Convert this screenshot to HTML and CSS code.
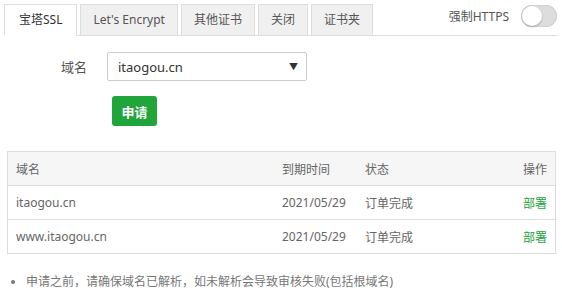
FILE: index.html
```html
<!DOCTYPE html>
<html lang="zh-CN">
<head>
  <meta charset="UTF-8">
  <title>SSL</title>
  <link rel="stylesheet" href="styles.css">
</head>
<body>
  <div class="ssl-box">
    <!-- tabs -->
    <div class="tab-bar">
      <ul class="tabs">
        <li class="tab active">宝塔SSL</li>
        <li class="tab">Let's Encrypt</li>
        <li class="tab">其他证书</li>
        <li class="tab">关闭</li>
        <li class="tab">证书夹</li>
      </ul>
      <div class="force-https">
        <span>强制HTTPS</span>
        <span class="switch"><span class="knob"></span></span>
      </div>
    </div>

    <!-- apply form -->
    <div class="form-line domain-line">
      <label class="form-label">域名</label>
      <div class="select">
        <span>itaogou.cn</span>
        <span class="arrow">▼</span>
      </div>
    </div>
    <div class="form-line">
      <button class="btn-apply">申请</button>
    </div>

    <!-- certificate list -->
    <table class="cert-table">
      <thead>
        <tr>
          <th class="col-name">域名</th>
          <th class="col-date">到期时间</th>
          <th class="col-status">状态</th>
          <th class="col-op">操作</th>
        </tr>
      </thead>
      <tbody>
        <tr>
          <td>itaogou.cn</td>
          <td>2021/05/29</td>
          <td>订单完成</td>
          <td class="col-op"><a class="deploy">部署</a></td>
        </tr>
        <tr>
          <td>www.itaogou.cn</td>
          <td>2021/05/29</td>
          <td>订单完成</td>
          <td class="col-op"><a class="deploy">部署</a></td>
        </tr>
      </tbody>
    </table>

    <ul class="help">
      <li>申请之前，请确保域名已解析，如未解析会导致审核失败(包括根域名)</li>
    </ul>
  </div>
</body>
</html>
```

FILE: styles.css
```css
body {
  margin: 0;
  padding: 0;
  background: #fff;
  font-family: "Noto Sans", "Noto Sans CJK SC", sans-serif;
  font-size: 12px;
  color: #555;
}

.ssl-box {
  padding: 4px 5px 0 7px;
}

.tab-bar {
  display: flex;
  justify-content: space-between;
  align-items: flex-start;
  border-bottom: 1px solid #ddd;
  margin-left: -3px;
}

.tabs {
  display: flex;
  list-style: none;
  margin: 0;
  padding: 0;
}

.tab {
  height: 30px;
  line-height: 30px;
  padding: 0 12px;
  margin-right: 3px;
  margin-bottom: -1px;
  border: 1px solid #ddd;
  background: #f0f0f0;
  color: #555;
  white-space: nowrap;
}

.tab.active {
  padding: 0 14px;
  background: #fff;
  border-bottom-color: #fff;
  color: #333;
}

.force-https {
  display: flex;
  align-items: center;
  gap: 12px;
  height: 23px;
  color: #555;
}

.switch {
  position: relative;
  display: block;
  width: 36px;
  height: 22px;
  border-radius: 11px;
  background: #ddd;
  box-shadow: inset 0 0 0 1px #d0d0d0;
}

.switch .knob {
  position: absolute;
  left: 1px;
  top: 1px;
  width: 20px;
  height: 20px;
  border-radius: 50%;
  background: #fff;
  box-shadow: 0 1px 2px rgba(0, 0, 0, 0.25);
}

.form-line {
  display: flex;
  align-items: center;
  padding-left: 100px;
}

.domain-line {
  margin-top: 16px;
}

.form-label {
  width: 80px;
  margin-left: -80px;
  padding-right: 20px;
  box-sizing: border-box;
  text-align: right;
  font-size: 13px;
  color: #555;
}

.select {
  display: flex;
  justify-content: space-between;
  align-items: center;
  width: 200px;
  height: 29px;
  box-sizing: border-box;
  padding: 0 8px 0 10px;
  border: 1px solid #ccc;
  border-radius: 2px;
  font-size: 13px;
  color: #333;
}

.select .arrow {
  font-size: 9px;
  color: #333;
}

.btn-apply {
  margin-top: 15px;
  margin-left: 5px;
  width: 45px;
  height: 30px;
  border: none;
  border-radius: 3px;
  background: #20a53a;
  color: #fff;
  font-family: inherit;
  font-size: 13px;
  font-weight: bold;
}

.cert-table {
  width: 549px;
  margin-top: 25px;
  border-collapse: collapse;
  border: 1px solid #ddd;
  color: #666;
  table-layout: fixed;
}

.cert-table th,
.cert-table td {
  height: 33px;
  padding: 0 8px;
  text-align: left;
  font-weight: normal;
  border-bottom: 1px solid #ddd;
  white-space: nowrap;
}

.cert-table th {
  background: #f6f6f6;
}

.cert-table .col-name {
  width: 250px;
}

.cert-table .col-date {
  width: 67px;
}

.cert-table .col-status {
  width: 124px;
}

.cert-table .col-op {
  text-align: right;
}

.deploy {
  color: #20a53a;
}

.help {
  margin: 18px 0 0;
  padding-left: 19px;
  color: #777;
}

.help li {
  line-height: 20px;
}
```
